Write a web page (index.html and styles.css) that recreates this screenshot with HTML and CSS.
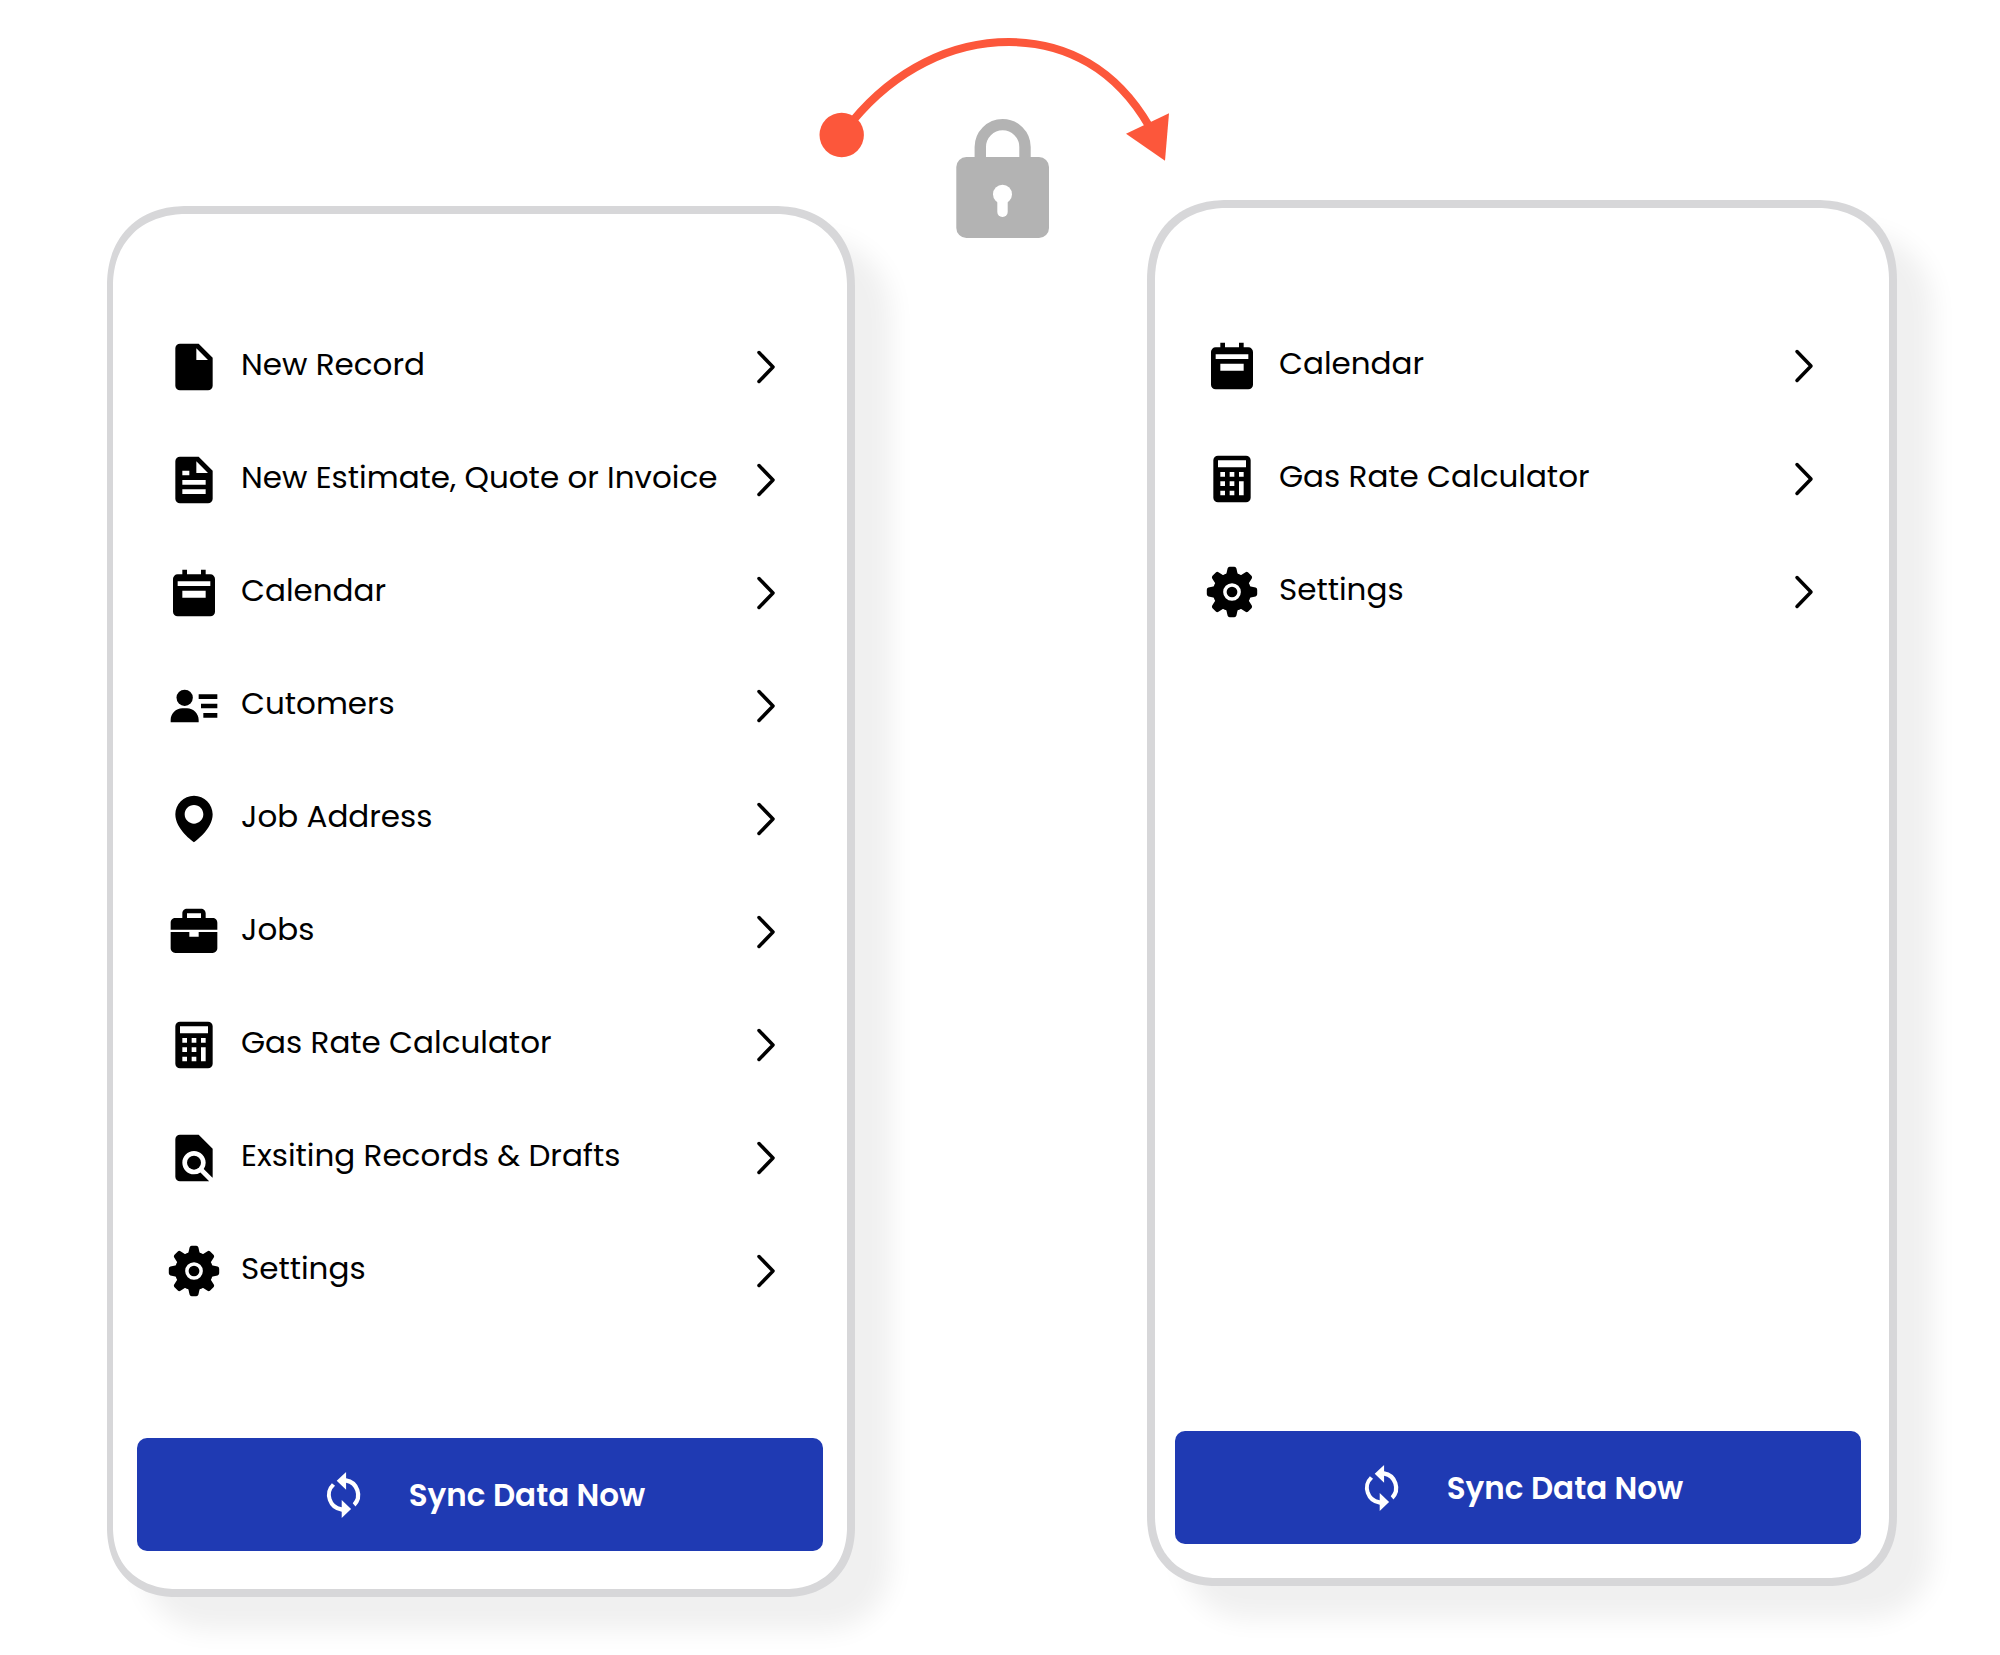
FILE: index.html
```html
<!DOCTYPE html>
<html lang="en">
<head>
<meta charset="utf-8">
<meta name="viewport" content="width=device-width, initial-scale=1">
<title>Menu access</title>
<link rel="stylesheet" href="styles.css">
</head>
<body>
<svg class="sprite" aria-hidden="true">
  <symbol id="file" viewBox="0 0 24 24"><path fill-rule="evenodd" d="M6 22h12a2 2 0 0 0 2-2V8l-6-6H6a2 2 0 0 0-2 2v16a2 2 0 0 0 2 2zM13 4l5 5h-5z"/></symbol>
  <symbol id="invoice" viewBox="0 0 24 24"><path fill-rule="evenodd" d="M6 22h12a2 2 0 0 0 2-2V8l-6-6H6a2 2 0 0 0-2 2v16a2 2 0 0 0 2 2zM13 4l5 5h-5zM7 8h3v2H7zM7 12h10v2H7zM7 16h10v2H7z"/></symbol>
  <symbol id="calendar" viewBox="0 0 24 24"><path fill-rule="evenodd" d="M5 22h14a2 2 0 0 0 2-2V6a2 2 0 0 0-2-2h-2V2h-2v2H9V2H7v2H5a2 2 0 0 0-2 2v14a2 2 0 0 0 2 2zM5 7h14v2H5zM7 11h10v3H7z"/></symbol>
  <symbol id="customers" viewBox="0 0 24 24"><path d="M14 7h8v2h-8zM15 11h7v2h-7zM16 15h6v2h-6zM9 13H7c-2.76 0-5 2.24-5 5v1h12v-1c0-2.76-2.24-5-5-5z"/><circle cx="8" cy="8.5" r="3.5"/></symbol>
  <symbol id="pin" viewBox="0 0 24 24"><path d="M12 2C7.589 2 4 5.589 4 9.995 3.971 16.44 11.696 21.784 12 22c0 0 8.029-5.56 8-12 0-4.411-3.589-8-8-8zm0 12c-2.21 0-4-1.79-4-4s1.79-4 4-4 4 1.79 4 4-1.79 4-4 4z"/></symbol>
  <symbol id="briefcase" viewBox="0 0 24 24"><path d="M20 6h-3V4c0-1.103-.897-2-2-2H9c-1.103 0-2 .897-2 2v2H4c-1.103 0-2 .897-2 2v3h20V8c0-1.103-.897-2-2-2zM9 4h6v2H9V4zm5 10h-4v-2H2v7c0 1.103.897 2 2 2h16c1.103 0 2-.897 2-2v-7h-8v2z"/></symbol>
  <symbol id="calculator" viewBox="0 0 24 24"><path fill-rule="evenodd" d="M6 2h12a2 2 0 0 1 2 2v16a2 2 0 0 1-2 2H6a2 2 0 0 1-2-2V4a2 2 0 0 1 2-2zM6 4h12v3H6zM7 9h2v2H7zM11 9h2v2h-2zM15 9h2v2h-2zM7 13h2v2H7zM11 13h2v2h-2zM7 17h2v2H7zM11 17h2v2h-2zM15 13h2v6h-2z"/></symbol>
  <symbol id="find" viewBox="0 0 24 24"><path d="M6 22h12c.178 0 .348-.03.512-.074l-3.759-3.759A4.966 4.966 0 0 1 12 19c-2.757 0-5-2.243-5-5s2.243-5 5-5 5 2.243 5 5a4.964 4.964 0 0 1-.833 2.753l3.759 3.759c.044-.164.074-.334.074-.512V8l-6-6H6a2 2 0 0 0-2 2v16a2 2 0 0 0 2 2z"/><circle cx="12" cy="14" r="3"/></symbol>
  <symbol id="cog" viewBox="0 0 24 24">
    <path id="teeth" d="M9.4 5 10.1 1.9q.2-.7.9-.7h2q.7 0 .9.7L14.6 5zM9.4 19l.7 3.1q.2.7.9.7h2q.7 0 .9-.7l.7-3.1z"/>
    <use href="#teeth" transform="rotate(45 12 12)"/><use href="#teeth" transform="rotate(90 12 12)"/><use href="#teeth" transform="rotate(135 12 12)"/>
    <path fill-rule="evenodd" d="M12 3.8a8.2 8.2 0 1 0 0 16.4 8.2 8.2 0 0 0 0-16.4zm0 4.4a3.8 3.8 0 1 1 0 7.6 3.8 3.8 0 0 1 0-7.6z"/><circle cx="12" cy="12" r="2.3"/>
  </symbol>
  <symbol id="chevron" viewBox="0 0 20 34"><path d="M3 2.500l14 14.500-14 14.500" fill="none" stroke="currentColor" stroke-width="3.500" stroke-linecap="round" stroke-linejoin="round"/></symbol>
  <symbol id="sync" viewBox="0 0 24 24"><path d="M6.200 6.400A8 8 0 0 0 10.900 20v3l4.500-4.300-4.500-4.300v3.500A6 6 0 0 1 7.700 7.500zM13 4V1L8.500 5.200 13 9.500V6.100A6 6 0 0 1 16.200 16l1.300 1.500A8 8 0 0 0 13 4z"/></symbol>
</svg>

<main class="scene">
  <section class="phone phone-full" aria-label="Full menu">
    <nav class="menu">
      <a class="item" href="#"><svg class="icon"><use href="#file"/></svg><span class="label">New Record</span><svg class="chevron"><use href="#chevron"/></svg></a>
      <a class="item" href="#"><svg class="icon"><use href="#invoice"/></svg><span class="label">New Estimate, Quote or Invoice</span><svg class="chevron"><use href="#chevron"/></svg></a>
      <a class="item" href="#"><svg class="icon"><use href="#calendar"/></svg><span class="label">Calendar</span><svg class="chevron"><use href="#chevron"/></svg></a>
      <a class="item" href="#"><svg class="icon"><use href="#customers"/></svg><span class="label">Cutomers</span><svg class="chevron"><use href="#chevron"/></svg></a>
      <a class="item" href="#"><svg class="icon"><use href="#pin"/></svg><span class="label">Job Address</span><svg class="chevron"><use href="#chevron"/></svg></a>
      <a class="item" href="#"><svg class="icon"><use href="#briefcase"/></svg><span class="label">Jobs</span><svg class="chevron"><use href="#chevron"/></svg></a>
      <a class="item" href="#"><svg class="icon"><use href="#calculator"/></svg><span class="label">Gas Rate Calculator</span><svg class="chevron"><use href="#chevron"/></svg></a>
      <a class="item" href="#"><svg class="icon"><use href="#find"/></svg><span class="label">Exsiting Records &amp; Drafts</span><svg class="chevron"><use href="#chevron"/></svg></a>
      <a class="item" href="#"><svg class="icon"><use href="#cog"/></svg><span class="label">Settings</span><svg class="chevron"><use href="#chevron"/></svg></a>
    </nav>
    <button class="sync" type="button"><svg class="sync-icon"><use href="#sync"/></svg><span>Sync Data Now</span></button>
  </section>

  <section class="phone phone-locked" aria-label="Restricted menu">
    <nav class="menu">
      <a class="item" href="#"><svg class="icon"><use href="#calendar"/></svg><span class="label">Calendar</span><svg class="chevron"><use href="#chevron"/></svg></a>
      <a class="item" href="#"><svg class="icon"><use href="#calculator"/></svg><span class="label">Gas Rate Calculator</span><svg class="chevron"><use href="#chevron"/></svg></a>
      <a class="item" href="#"><svg class="icon"><use href="#cog"/></svg><span class="label">Settings</span><svg class="chevron"><use href="#chevron"/></svg></a>
    </nav>
    <button class="sync" type="button"><svg class="sync-icon"><use href="#sync"/></svg><span>Sync Data Now</span></button>
  </section>

  <svg class="link" viewBox="0 0 366 220" role="img" aria-label="Locked">
    <g fill="#fc573b">
      <circle cx="22.700" cy="115" r="22.200"/>
      <path d="M350 93.300 307 113.700 346 140.700z"/>
      <path d="M34 100.500C76 50 132 22 190 22 247 22 297 49 330 106" fill="none" stroke="#fc573b" stroke-width="8"/>
    </g>
    <g fill="#b3b3b3">
      <path d="M161.300 140V127a22.300 22.300 0 0 1 44.700 0v13" fill="none" stroke="#b3b3b3" stroke-width="11.400"/>
      <rect x="137.300" y="137" width="92.700" height="81" rx="10"/>
    </g>
    <g fill="#fff"><circle cx="183.500" cy="174.300" r="9.500"/><rect x="178.300" y="176" width="10.400" height="21" rx="5"/></g>
  </svg>
</main>
</body>
</html>
```
FILE: styles.css
```css
* { box-sizing: border-box; }

body {
  margin: 0;
  background: #fff;
  color: #000;
  font-family: Poppins, Inter, sans-serif;
  font-size: 31px;
  line-height: 40px;
}

.sprite { position: absolute; width: 0; height: 0; }

.scene {
  display: grid;
  grid-template-columns: 748fr 292fr 750fr;
  grid-template-rows: auto;
  padding: 0 103px 58px 107px;
}

.phone {
  grid-row: 1;
  display: flex;
  flex-direction: column;
  background: #fff;
  border: 8px solid #d7d7d9;
  border-radius: 72px 72px 62px 62px;
  box-shadow: 36px 33px 26px #f0f0f0;
}

@supports (corner-shape: superellipse(1.15)) {
  .phone {
    border-radius: 80px 80px 70px 70px;
    corner-shape: superellipse(1.15);
  }
}

.phone-full {
  grid-column: 1;
  margin-top: 206px;
  border-left-width: 6px;
  padding: 96px 24px 38px;
}

.phone-locked {
  grid-column: 3;
  margin: 200px 0 11px;
  padding: 101px 28px 34px 20px;
}

.menu {
  flex: 1;
  padding: 0 47px 111px 29px;
}

.item {
  display: flex;
  align-items: center;
  height: 113px;
  color: inherit;
  text-decoration: none;
}

.icon {
  flex: none;
  width: 56px;
  height: 56px;
  fill: currentColor;
}

.label {
  flex: 1;
  padding: 0 0 6px 19px;
  white-space: nowrap;
}

.chevron {
  flex: none;
  width: 20px;
  height: 34px;
}

.sync {
  display: flex;
  align-items: center;
  justify-content: center;
  gap: 40px;
  width: 100%;
  height: 113px;
  padding: 0 0 0 4px;
  border: 0;
  border-radius: 10px;
  background: #1f3ab3;
  color: #fff;
  font: inherit;
  font-weight: 600;
}

.sync-icon {
  width: 50px;
  height: 50px;
  fill: currentColor;
}

/* The arrow spans the gap and reaches over both phones. */
.link {
  grid-row: 1;
  grid-column: 1 / -1;
  justify-self: center;
  align-self: start;
  width: 366px;
  height: 220px;
  margin-top: 20px;
}
```
